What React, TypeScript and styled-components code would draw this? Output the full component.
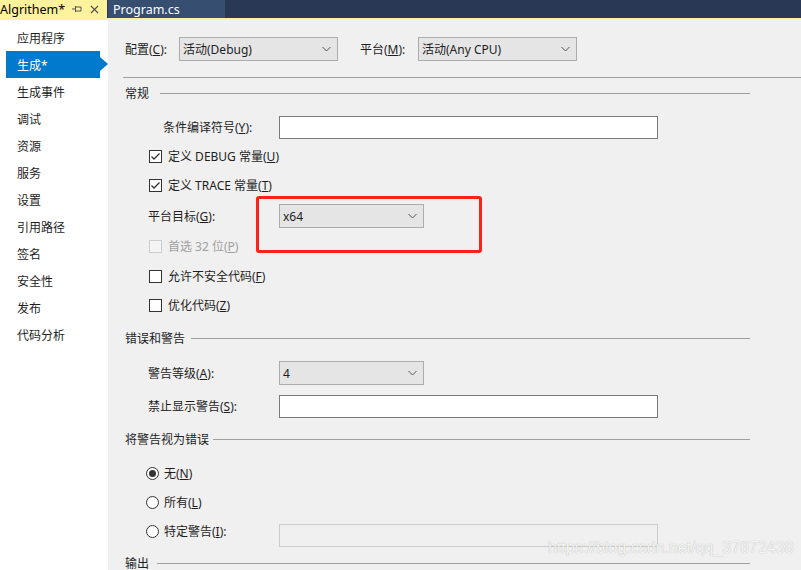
import styled, { createGlobalStyle } from "styled-components";

const GlobalStyle = createGlobalStyle`
  html, body {
    margin: 0;
    padding: 0;
  }
  body {
    font-family: "Segoe UI", "Noto Sans", "Noto Sans CJK SC", sans-serif;
    font-size: 12px;
    color: #1e1e1e;
    background: #f0f0f0;
    overflow: hidden;
  }
`;

const Window = styled.div`
  width: 801px;
  height: 570px;
  display: flex;
  flex-direction: column;
  overflow: hidden;
  position: relative;
`;

const TabBar = styled.div`
  height: 18px;
  display: flex;
  background: #293955;
  border-bottom: 2px solid #fff29d;
`;

const Tab = styled.div<{ $active?: boolean }>`
  display: flex;
  align-items: center;
  width: ${(p) => (p.$active ? 107 : 117)}px;
  margin-left: ${(p) => (p.$active ? 0 : 1)}px;
  padding-left: ${(p) => (p.$active ? 0 : 5)}px;
  box-sizing: border-box;
  background: ${(p) => (p.$active ? "#fff29d" : "#364e6f")};
  color: ${(p) => (p.$active ? "#000" : "#fff")};
  font-size: 12.5px;
  white-space: nowrap;
`;

const TabTitle = styled.span`
  flex: 1;
`;

const TabIcon = styled.svg`
  margin-right: 8px;
  flex-shrink: 0;
`;

const Body = styled.div`
  flex: 1;
  display: flex;
  min-height: 0;
`;

const Sidebar = styled.nav`
  width: 108px;
  flex-shrink: 0;
  background: #fff;
  padding-top: 4px;
  box-sizing: border-box;
`;

const NavItem = styled.div<{ $active?: boolean }>`
  position: relative;
  height: 27px;
  width: 94px;
  margin-left: 6px;
  padding-left: 11px;
  box-sizing: border-box;
  display: flex;
  align-items: center;
  background: ${(p) => (p.$active ? "#007acc" : "transparent")};
  color: ${(p) => (p.$active ? "#fff" : "#1e1e1e")};
  ${(p) =>
    p.$active &&
    `
    &::after {
      content: "";
      position: absolute;
      right: -8px;
      top: 6px;
      border-left: 8px solid #007acc;
      border-top: 7px solid transparent;
      border-bottom: 7px solid transparent;
    }
  `}
`;

const Main = styled.main`
  flex: 1;
  display: flex;
  flex-direction: column;
  padding-left: 15px;
`;

const Row = styled.div<{ $mt: number; $indent: number }>`
  display: flex;
  align-items: center;
  height: 24px;
  flex-shrink: 0;
  margin-top: ${(p) => p.$mt}px;
  padding-left: ${(p) => p.$indent}px;
`;

const Label = styled.span<{ $w: number; $disabled?: boolean }>`
  width: ${(p) => p.$w}px;
  flex-shrink: 0;
  white-space: nowrap;
  color: ${(p) => (p.$disabled ? "#a0a0a0" : "inherit")};
`;

const Select = styled.div<{ $w: number }>`
  position: relative;
  width: ${(p) => p.$w}px;
  height: 24px;
  box-sizing: border-box;
  border: 1px solid #acacac;
  background: #e5e5e5;
  display: flex;
  align-items: center;
  padding-left: 3px;
  padding-right: 6px;
  flex-shrink: 0;
`;

const SelectValue = styled.span`
  flex: 1;
`;

const TextBox = styled.div<{ $disabled?: boolean }>`
  width: 379px;
  height: 23px;
  box-sizing: border-box;
  border: 1px solid ${(p) => (p.$disabled ? "#cccccc" : "#7a7a7a")};
  background: ${(p) => (p.$disabled ? "#f0f0f0" : "#fff")};
  flex-shrink: 0;
`;

const Divider = styled.div`
  height: 1px;
  background: #a0a0a0;
  margin-top: 16px;
  flex-shrink: 0;
`;

const SectionHeader = styled.div<{ $mt: number; $gap: number }>`
  display: flex;
  align-items: center;
  height: 24px;
  flex-shrink: 0;
  margin-top: ${(p) => p.$mt}px;
  margin-right: 51px;
  padding-left: 2px;
  gap: ${(p) => p.$gap}px;
`;

const SectionLine = styled.div`
  flex: 1;
  height: 1px;
  background: #a0a0a0;
`;

const CheckBox = styled.span<{ $disabled?: boolean }>`
  width: 13px;
  height: 13px;
  box-sizing: border-box;
  border: 1px solid ${(p) => (p.$disabled ? "#cccccc" : "#333")};
  background: ${(p) => (p.$disabled ? "#f4f4f4" : "#fff")};
  display: flex;
  align-items: center;
  justify-content: center;
  margin-left: 1px;
  margin-right: 6px;
  flex-shrink: 0;
`;

const Radio = styled.span`
  width: 13px;
  height: 13px;
  box-sizing: border-box;
  border: 1px solid #333;
  border-radius: 50%;
  background: #fff;
  display: flex;
  align-items: center;
  justify-content: center;
  margin-left: -2px;
  margin-right: 5px;
  flex-shrink: 0;
`;

const RadioDot = styled.span`
  width: 7px;
  height: 7px;
  border-radius: 50%;
  background: #333;
`;

const Highlight = styled.div`
  position: absolute;
  left: -23px;
  top: -8px;
  width: 226px;
  height: 57px;
  box-sizing: border-box;
  border: 3px solid #ff1f1f;
  border-radius: 3px;
  pointer-events: none;
`;

const Anchor = styled.div`
  position: relative;
`;

const Watermark = styled.div`
  position: absolute;
  left: 548px;
  top: 539px;
  font-family: "Liberation Sans", Arial, sans-serif;
  font-size: 16px;
  color: rgba(255, 255, 255, 0.85);
  text-shadow: 0 0 1px rgba(140, 140, 140, 0.7);
  pointer-events: none;
`;

const Chevron = () => (
  <svg width="9" height="6" viewBox="0 0 9 6">
    <path d="M0.5 1 L4.5 5 L8.5 1" fill="none" stroke="#555" strokeWidth="1" />
  </svg>
);

const Check = () => (
  <svg width="11" height="11" viewBox="0 0 11 11">
    <path d="M1.5 5.5 L4 8 L9.5 2.5" fill="none" stroke="#333" strokeWidth="1.3" />
  </svg>
);

const navItems = [
  "应用程序",
  "生成*",
  "生成事件",
  "调试",
  "资源",
  "服务",
  "设置",
  "引用路径",
  "签名",
  "安全性",
  "发布",
  "代码分析",
];

const App = () => {
  return (
    <Window>
      <GlobalStyle />
      <TabBar>
        <Tab $active>
          <TabTitle>Algrithem*</TabTitle>
          <TabIcon width="10" height="8" viewBox="0 0 10 8">
            <path d="M0 4 H3 M3.5 1 V7 M3.5 2 H9 V6 H3.5" fill="none" stroke="#555" strokeWidth="1" />
          </TabIcon>
          <TabIcon width="9" height="9" viewBox="0 0 9 9">
            <path d="M1 1 L8 8 M8 1 L1 8" fill="none" stroke="#555" strokeWidth="1.2" />
          </TabIcon>
        </Tab>
        <Tab>Program.cs</Tab>
      </TabBar>
      <Body>
        <Sidebar>
          {navItems.map((item) => (
            <NavItem key={item} $active={item === "生成*"}>
              {item}
            </NavItem>
          ))}
        </Sidebar>
        <Main>
          <Row $mt={17} $indent={2}>
            <Label $w={54}>
              配置(<u>C</u>):
            </Label>
            <Select $w={159}>
              <SelectValue>活动(Debug)</SelectValue>
              <Chevron />
            </Select>
            <Label $w={58} style={{ marginLeft: 22 }}>
              平台(<u>M</u>):
            </Label>
            <Select $w={159}>
              <SelectValue>活动(Any CPU)</SelectValue>
              <Chevron />
            </Select>
          </Row>
          <Divider />

          <SectionHeader $mt={3} $gap={11}>
            常规
            <SectionLine />
          </SectionHeader>
          <Row $mt={10} $indent={40}>
            <Label $w={116}>
              条件编译符号(<u>Y</u>):
            </Label>
            <TextBox />
          </Row>
          <Row $mt={5} $indent={25}>
            <CheckBox>
              <Check />
            </CheckBox>
            定义 DEBUG 常量(<u>U</u>)
          </Row>
          <Row $mt={5} $indent={25}>
            <CheckBox>
              <Check />
            </CheckBox>
            定义 TRACE 常量(<u>T</u>)
          </Row>
          <Row $mt={7} $indent={25}>
            <Label $w={131}>
              平台目标(<u>G</u>):
            </Label>
            <Anchor>
              <Select $w={145}>
                <SelectValue>x64</SelectValue>
                <Chevron />
              </Select>
              <Highlight />
            </Anchor>
          </Row>
          <Row $mt={6} $indent={25}>
            <CheckBox $disabled />
            <Label $w={200} $disabled>
              首选 32 位(<u>P</u>)
            </Label>
          </Row>
          <Row $mt={6} $indent={25}>
            <CheckBox />
            允许不安全代码(<u>F</u>)
          </Row>
          <Row $mt={5} $indent={25}>
            <CheckBox />
            优化代码(<u>Z</u>)
          </Row>

          <SectionHeader $mt={9} $gap={6}>
            错误和警告
            <SectionLine />
          </SectionHeader>
          <Row $mt={11} $indent={25}>
            <Label $w={131}>
              警告等级(<u>A</u>):
            </Label>
            <Select $w={145}>
              <SelectValue>4</SelectValue>
              <Chevron />
            </Select>
          </Row>
          <Row $mt={9} $indent={25}>
            <Label $w={131}>
              禁止显示警告(<u>S</u>):
            </Label>
            <TextBox />
          </Row>

          <SectionHeader $mt={9} $gap={4}>
            将警告视为错误
            <SectionLine />
          </SectionHeader>
          <Row $mt={10} $indent={25}>
            <Radio>
              <RadioDot />
            </Radio>
            无(<u>N</u>)
          </Row>
          <Row $mt={5} $indent={25}>
            <Radio />
            所有(<u>L</u>)
          </Row>
          <Row $mt={5} $indent={25}>
            <Radio />
            <Label $w={115}>
              特定警告(<u>I</u>):
            </Label>
            <TextBox $disabled style={{ alignSelf: "flex-start", marginTop: 5 }} />
          </Row>

          <SectionHeader $mt={8} $gap={8}>
            输出
            <SectionLine />
          </SectionHeader>
        </Main>
      </Body>
      <Watermark>https://blog.csdn.net/qq_37672438</Watermark>
    </Window>
  );
};

export default App;
